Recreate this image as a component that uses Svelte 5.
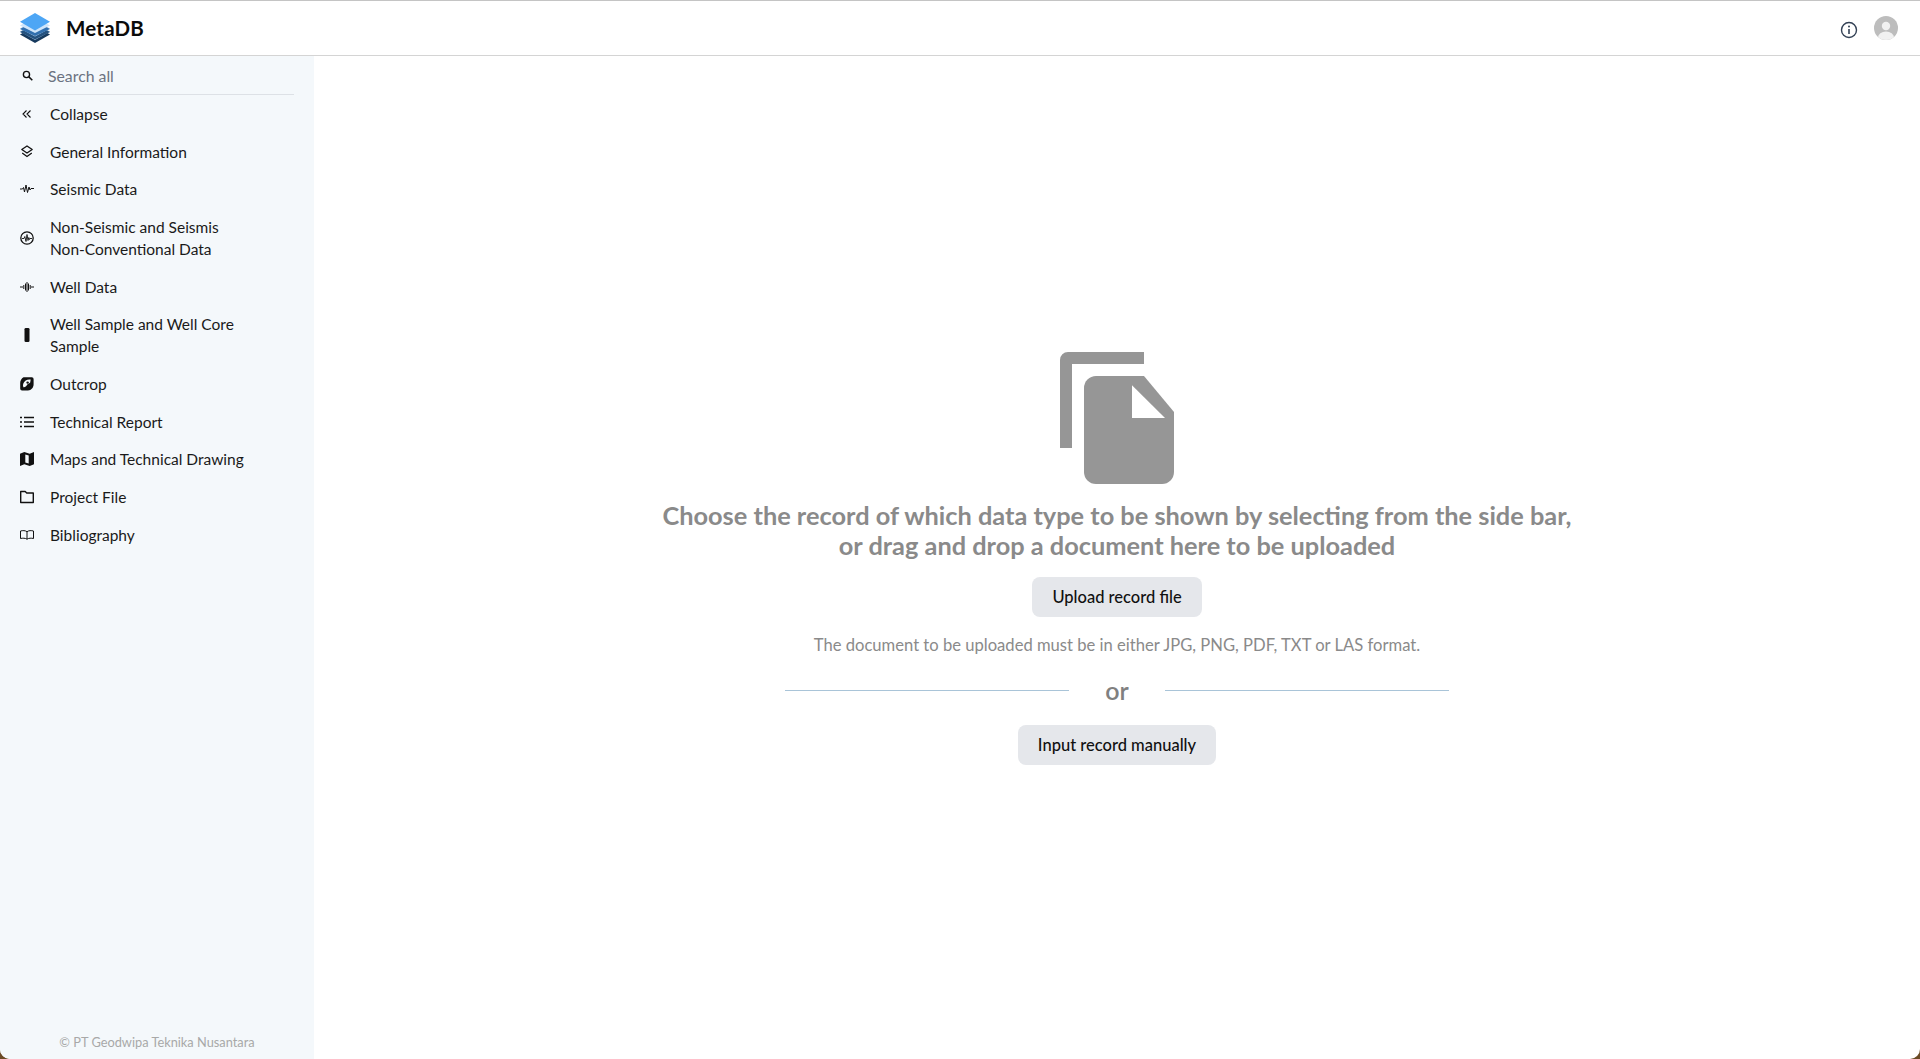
<script lang="ts">
  const items = [
    { icon: "collapse", label: ["Collapse"] },
    { icon: "layers", label: ["General Information"] },
    { icon: "pulse", label: ["Seismic Data"] },
    { icon: "radar", label: ["Non-Seismic and Seismis", "Non-Conventional Data"] },
    { icon: "well", label: ["Well Data"] },
    { icon: "core", label: ["Well Sample and Well Core", "Sample"] },
    { icon: "outcrop", label: ["Outcrop"] },
    { icon: "list", label: ["Technical Report"] },
    { icon: "map", label: ["Maps and Technical Drawing"] },
    { icon: "folder", label: ["Project File"] },
    { icon: "book", label: ["Bibliography"] },
  ];
</script>

{#snippet navIcon(name: string)}
  <svg class="nav-ico" viewBox="0 0 14 14" aria-hidden="true">
    {#if name === "collapse"}
      <path d="M6.500 3.500 3 7l3.500 3.500M10.500 3.500 7 7l3.500 3.500" fill="none" stroke="currentColor" stroke-width="1.100" />
    {:else if name === "layers"}
      <path d="M7 1 12.200 4.500 7 8 1.800 4.500Z" fill="none" stroke="currentColor" stroke-width="1.300" stroke-linejoin="round" />
      <path d="M2.200 8 7 11.500 11.800 8" fill="none" stroke="currentColor" stroke-width="1.300" />
    {:else if name === "pulse"}
      <path d="M0 7h2.500l1-1.500 1 4.500L6 3l1.500 7.500L9 5l1 3 1-1.500h3" fill="none" stroke="currentColor" stroke-width="1" />
    {:else if name === "radar"}
      <circle cx="7" cy="7" r="6.200" fill="none" stroke="currentColor" stroke-width="1.300" />
      <path d="M2 7.500h2l.8-2L6 10.500 7 3.500l1 6 .8-3 .7 2 .5-1h2" fill="none" stroke="currentColor" stroke-width=".9" />
    {:else if name === "well"}
      <path d="M0 7h3M11 7h3" stroke="currentColor" stroke-width="1.100" />
      <path d="M3.800 5v4M5.500 3.500v7M7 2v10M8.500 3.500v7M10.200 5v4" stroke="currentColor" stroke-width="1" />
    {:else if name === "core"}
      <rect x="4.500" y="0" width="5" height="14" rx="1.300" fill="currentColor" />
    {:else if name === "outcrop"}
      <path d="M3.500 0.300h8.300a1.800 1.800 0 0 1 1.800 1.800v5.200c0 3.300-2.300 6.200-5.600 6.200H2a1.800 1.800 0 0 1-1.800-1.800V6C.2 3.800 1.500 1.500 3.500.3Z" fill="currentColor" />
      <path d="M3.400 10.300C2.300 8 3.300 5 5.700 3.400c1.500-.9 3.500-1.100 5-.8l-.5 3c-1.200 1.500-2.600 1-3.200 2.500-.6 1.300-2 2.500-3.600 2.200Z" fill="#f4f8fb" />
      <circle cx="7.600" cy="5.600" r="1.200" fill="currentColor" />
    {:else if name === "list"}
      <path d="M4 2.500h10M4 7h10M4 11.500h10" stroke="currentColor" stroke-width="1.300" />
      <path d="M0 2.500h2M0 7h2M0 11.500h2" stroke="currentColor" stroke-width="1.600" />
    {:else if name === "map"}
      <path d="M0 1.800 4.300 0 9.700 1.800 14 0V12.200L9.700 14 4.300 12.200 0 14Z" fill="currentColor" />
      <path d="M5.300 2.400 8.700 3.500V11.600L5.300 10.500Z" fill="#f4f8fb" />
    {:else if name === "folder"}
      <path d="M.7 1.500h4.500L6.700 3h6.600v9.500H.7Z" fill="none" stroke="currentColor" stroke-width="1.400" stroke-linejoin="round" />
    {:else if name === "book"}
      <path d="M.5 3c2.300-.6 4.700-.6 6.500.7C8.800 2.400 11.200 2.400 13.500 3v7.500c-2.300-.5-4.700-.5-6.500.7-1.800-1.200-4.200-1.200-6.500-.7ZM7 3.700v7.500" fill="none" stroke="currentColor" stroke-width="1" />
    {/if}
  </svg>
{/snippet}

<div class="page">
  <header class="topbar">
    <div class="brand">
      <svg class="logo" viewBox="0 0 30 30" aria-hidden="true">
        <path d="M15 13 30 21.500 15 30 0 21.500Z" fill="#173a5e" />
        <path d="M15 10 30 18.500 15 27 0 18.500Z" fill="#a9c6e2" />
        <path d="M15 11 30 19 15 26.500 0 19Z" fill="#24527f" />
        <path d="M15 7 30 15.500 15 23.500 0 15.500Z" fill="#bcd8f2" />
        <path d="M15 8 30 16 15 23 0 16Z" fill="#316fae" />
        <path d="M15 4 30 12.500 15 20 0 12.500Z" fill="#cfe5fa" />
        <path d="M15 0 30 8.700 15 17.500 0 8.700Z" fill="#4da6f5" />
      </svg>
      <span class="brand-name">MetaDB</span>
    </div>
    <div class="top-actions">
      <svg class="info" viewBox="0 0 18 18" aria-hidden="true">
        <circle cx="9" cy="9" r="7.500" fill="none" stroke="#334155" stroke-width="1.400" />
        <path d="M9 8v5" stroke="#334155" stroke-width="1.600" />
        <circle cx="9" cy="5.500" r="1" fill="#334155" />
      </svg>
      <svg class="avatar" viewBox="0 0 24 24" aria-hidden="true">
        <defs><clipPath id="av"><circle cx="12" cy="12" r="12" /></clipPath></defs>
        <circle cx="12" cy="12" r="12" fill="#bdbdbd" />
        <circle cx="12" cy="10" r="4.200" fill="#f1f1f1" />
        <ellipse cx="12" cy="21.500" rx="8" ry="6" fill="#f1f1f1" clip-path="url(#av)" />
      </svg>
    </div>
  </header>

  <div class="body">
    <aside class="sidebar">
      <div class="search">
        <svg class="search-ico" viewBox="0 0 16 16" aria-hidden="true">
          <circle cx="6.500" cy="6.500" r="4.500" fill="none" stroke="currentColor" stroke-width="2" />
          <path d="M10 10 15 15" stroke="currentColor" stroke-width="2.200" />
        </svg>
        <span>Search all</span>
      </div>
      <nav class="nav">
        {#each items as item}
          <div class="nav-item">
            {@render navIcon(item.icon)}
            <span class="nav-label">{#each item.label as line}<span class="line">{line}</span>{/each}</span>
          </div>
        {/each}
      </nav>
      <footer class="copy">© PT Geodwipa Teknika Nusantara</footer>
    </aside>

    <main class="main">
      <svg class="doc" viewBox="0 0 114 132" aria-hidden="true">
        <path d="M84 0H8a8 8 0 0 0-8 8v88h12V12h72Z" fill="#969696" />
        <path d="M36 24h48l30 36v60a12 12 0 0 1-12 12H36a12 12 0 0 1-12-12V36a12 12 0 0 1 12-12Z" fill="#969696" />
        <path d="M72 33.300V66h33Z" fill="#fff" />
      </svg>
      <h2 class="title">Choose the record of which data type to be shown by selecting from the side bar,<br />or drag and drop a document here to be uploaded</h2>
      <button class="btn first">Upload record file</button>
      <p class="hint">The document to be uploaded must be in either JPG, PNG, PDF, TXT or LAS format.</p>
      <div class="or"><span class="rule"></span><span class="or-text">or</span><span class="rule"></span></div>
      <button class="btn">Input record manually</button>
    </main>
  </div>
</div>

<style>
  :global(body) { margin: 0; background: #6b4a25; }
  .page {
    position: relative; height: 1059px; overflow: hidden; display: flex; flex-direction: column;
    font-family: Lato, "Noto Sans", sans-serif; color: #111; background: #fff;
    border-top: 1px solid #c4c4c4; box-sizing: border-box; border-radius: 0 0 10px 10px;
  }
  .topbar {
    height: 54px; flex: none; display: flex; align-items: center; justify-content: space-between;
    padding: 0 22px 0 20px; border-bottom: 1px solid #d4d4d4; background: #fff;
  }
  .brand { display: flex; align-items: center; gap: 16px; }
  .logo { width: 30px; height: 30px; display: block; }
  .brand-name { font-size: 20.500px; font-weight: 700; letter-spacing: 0.2px; color: #0b0b0b; }
  .top-actions { display: flex; align-items: center; gap: 16.500px; }
  .info { width: 18px; height: 18px; margin-top: 3px; }
  .avatar { width: 24px; height: 24px; }

  .body { flex: 1; display: flex; min-height: 0; }
  .sidebar {
    width: 314px; flex: none; display: flex; flex-direction: column; background: #f4f8fb;
    padding: 0 20px; box-sizing: border-box;
  }
  .search {
    display: flex; align-items: center; gap: 15px; height: 39px; width: 274px; box-sizing: border-box;
    padding-top: 1px; border-bottom: 1px solid #dde1e6; font-size: 15.800px; color: #6b7280;
  }
  .search-ico { width: 11px; height: 11px; color: #111; margin-left: 2px; }
  .nav { display: flex; flex-direction: column; }
  .nav-item { display: flex; align-items: center; gap: 16px; padding: 7.850px 0; font-size: 15.500px; line-height: 22px; color: #1a1a1a; }
  .nav-ico { width: 14px; height: 14px; flex: none; color: #111; }
  .line { display: block; }
  .copy { margin-top: auto; text-align: center; font-size: 12.800px; color: #a8a8a8; padding-bottom: 9px; width: 274px; }

  .main { flex: 1; display: flex; flex-direction: column; align-items: center; padding-top: 296px; }
  .doc { width: 114px; height: 132px; display: block; }
  .title { margin: 16px 0 0; font-size: 25.350px; line-height: 30px; font-weight: 700; color: #8a8a8a; text-align: center; }
  .btn {
    margin-top: 20px; height: 40px; padding: 0 20px; border: none; border-radius: 8px; background: #e5e7eb;
    font: 500 16.500px Lato, "Noto Sans", sans-serif; color: #111;
  }
  .btn.first { margin-top: 17px; }
  .hint { margin: 17px 0 0; font-size: 16.600px; line-height: 22px; color: #8a8a8a; }
  .or { width: 664px; display: flex; align-items: center; margin-top: 18.500px; }
  .rule { flex: 1; height: 1px; background: #a9c4d8; margin-top: 1px; }
  .or-text { width: 96px; text-align: center; font-size: 25px; line-height: 30px; font-weight: 600; color: #808080; }
</style>
